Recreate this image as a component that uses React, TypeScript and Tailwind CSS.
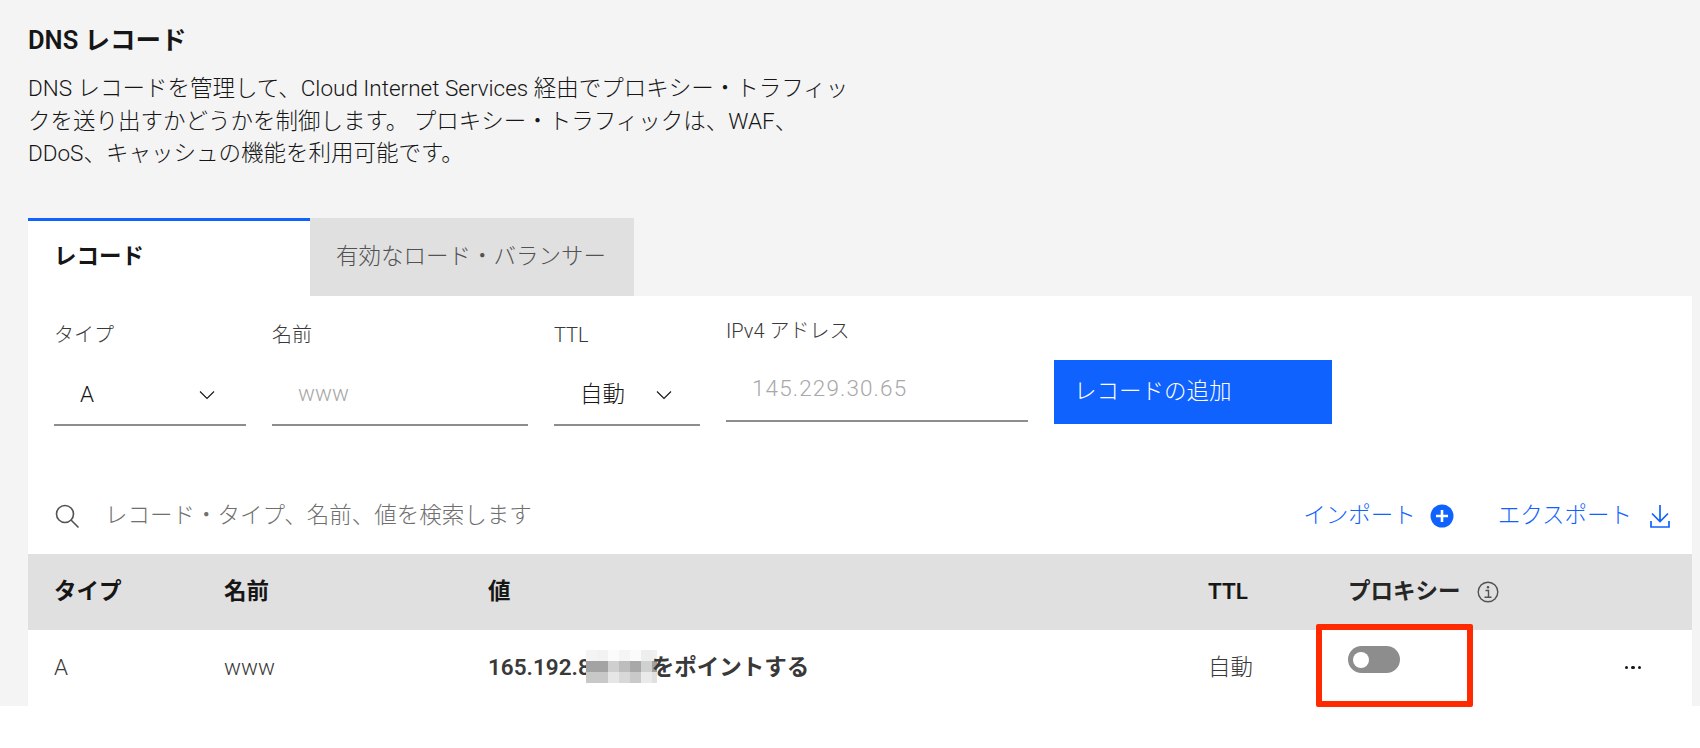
import React from 'react';

const blurRows = [
    ['#f4f4f4', '#f2f2f2', '#fbfbfb', '#f5f5f5', '#fbfbfb', '#eeeeee', '#f0f0f0'],
    ['#a3a3a3', '#a3a3a3', '#cfcfcf', '#bdbdbd', '#a8a8a8', '#d0d0d0', '#a0a0a0'],
    ['#c8c8c8', '#c8c8c8', '#e6e6e6', '#d8d8d8', '#c9c9c9', '#eaeaea', '#e0e0e0'],
];

const Chevron = () => (
    <svg width="16" height="16" viewBox="0 0 16 16" fill="none" stroke="#161616" strokeWidth="1.1">
        <path d="M1 4.5 L8 11.5 L15 4.5" />
    </svg>
);

const SelectField: React.FC<{ label: string; value: string; className: string; pad: string }> = ({ label, value, className, pad }) => (
    <div className={`flex flex-col ${className}`}>
        <label className="text-[20px] leading-[24px] font-light text-[#393939]">{label}</label>
        <div className={`mt-[23px] h-[56px] pb-[4px] flex items-center justify-between border-b-2 border-[#8d8d8d] text-[22.5px] font-light text-[#161616] ${pad}`}>
            <span>{value}</span>
            <Chevron />
        </div>
    </div>
);

const App: React.FC = () => {
    return (
        <div className="w-[1700px] h-[748px] bg-white overflow-hidden font-['Roboto','Noto_Sans_CJK_JP',sans-serif]">
            <div className="h-[706px] bg-[#f4f4f4] pl-[28px] pr-[8px]">
                <h1 className="pt-[24px] text-[25.5px] leading-[32px] font-semibold text-[#161616]">DNS レコード</h1>
                <p className="mt-[16px] w-[830px] text-[22.5px] leading-[32.5px] font-light text-[#161616]">
                    DNS レコードを管理して、Cloud Internet Services 経由でプロキシー・トラフィックを送り出すかどうかを制御します。 プロキシー・トラフィックは、WAF、<br />DDoS、キャッシュの機能を利用可能です。
                </p>

                <div className="mt-[48px] flex h-[78px]">
                    <div className="w-[282px] bg-white border-t-[3px] border-[#0f62fe] pl-[26px] pb-[2px] flex items-center text-[22.5px] font-semibold text-[#161616]">レコード</div>
                    <div className="w-[324px] bg-[#e0e0e0] pl-[26px] flex items-center text-[22.5px] font-light text-[#525252]">有効なロード・バランサー</div>
                </div>

                <div className="bg-white h-[410px]">
                    <div className="flex items-start pl-[26px] pt-[27px] h-[189px]">
                        <SelectField label="タイプ" value="A" className="w-[192px]" pad="pl-[26px] pr-[31px]" />
                        <div className="ml-[26px] w-[256px] flex flex-col">
                            <label className="text-[20px] leading-[24px] font-light text-[#393939]">名前</label>
                            <div className="mt-[23px] h-[56px] pb-[6px] flex items-center border-b-2 border-[#8d8d8d] pl-[26px] text-[22.5px] font-light text-[#a8a8a8]">www</div>
                        </div>
                        <SelectField label="TTL" value="自動" className="ml-[26px] w-[146px]" pad="pl-[26px] pr-[28px]" />
                        <div className="ml-[26px] w-[302px] flex flex-col -mt-[4px]">
                            <label className="text-[20px] leading-[24px] font-light text-[#393939]">IPv4 アドレス</label>
                            <div className="mt-[23px] h-[56px] pb-[8px] flex items-center border-b-2 border-[#8d8d8d] pl-[26px] text-[22.5px] tracking-[1.1px] font-light text-[#a8a8a8]">145.229.30.65</div>
                        </div>
                        <button className="ml-[26px] mt-[37px] w-[278px] h-[64px] bg-[#0f62fe] text-white text-[22.5px] font-light text-left pl-[20px]">レコードの追加</button>
                    </div>
                    <div className="flex items-center justify-between h-[69px] pb-[6px] pl-[26px] pr-[20px]">
                        <div className="flex items-center">
                            <svg width="26" height="26" viewBox="0 0 26 26" fill="none" stroke="#525252" strokeWidth="1.6">
                                <circle cx="11" cy="11" r="8.5" />
                                <path d="M17 17 L24.5 24.5" />
                            </svg>
                            <span className="ml-[25px] text-[22.5px] font-light text-[#6f6f6f]">レコード・タイプ、名前、値を検索します</span>
                        </div>
                        <div className="flex items-center text-[22.5px] font-light text-[#0f62fe]">
                            <span>インポート</span>
                            <svg className="ml-[14px]" width="24" height="24" viewBox="0 0 24 24">
                                <circle cx="12" cy="12" r="11.5" fill="#0f62fe" />
                                <path d="M12 6 V18 M6 12 H18" stroke="white" strokeWidth="2.6" />
                            </svg>
                            <span className="ml-[44px]">エクスポート</span>
                            <svg className="ml-[16px]" width="24" height="26" viewBox="0 0 24 26" fill="none" stroke="#0f62fe" strokeWidth="1.7">
                                <path d="M12 2 V18 M4 10.5 L12 18.5 L20 10.5 M3 18 V24 H21 V18" />
                            </svg>
                        </div>
                    </div>
                    <div className="grid grid-cols-[170px_264px_720px_140px_1fr] h-[76px] bg-[#e0e0e0] items-center pl-[26px] text-[22.5px] font-semibold text-[#161616]">
                        <div>タイプ</div>
                        <div>名前</div>
                        <div>値</div>
                        <div>TTL</div>
                        <div className="flex items-center text-[#262626]">
                            プロキシー
                            <svg className="ml-[16px]" width="22" height="22" viewBox="0 0 22 22" fill="none" stroke="#525252" strokeWidth="1.4">
                                <circle cx="11" cy="11" r="9.8" />
                                <path d="M8.5 9.5 H11.5 V16 M7.5 16.2 H14.5" />
                                <circle cx="11" cy="6.3" r="0.6" fill="#525252" />
                            </svg>
                        </div>
                    </div>
                    <div className="relative grid grid-cols-[170px_264px_720px_140px_1fr] h-[76px] items-center pl-[26px] text-[22.5px] font-light text-[#393939]">
                        <div>A</div>
                        <div>www</div>
                        <div className="flex items-center font-semibold">
                            <span>165.192.8</span>
                            <div className="grid grid-cols-[repeat(6,11px)_5px] grid-rows-[repeat(3,11px)] w-[71px] -mt-[2px] -ml-[5px] -mr-[5px]">
                                {blurRows.flat().map((c, i) => (
                                    <div key={i} style={{ backgroundColor: c }} />
                                ))}
                            </div>
                            <span className="relative">をポイントする</span>
                        </div>
                        <div>自動</div>
                        <div className="flex items-center justify-between pr-[51px]">
                            <div className="w-[52px] h-[27px] -mt-[16px] rounded-full bg-[#8d8d8d] flex items-center pl-[5px]">
                                <div className="w-[16px] h-[16px] rounded-full bg-white" />
                            </div>
                            <div className="flex gap-[3px]">
                                <span className="w-[3.5px] h-[3.5px] rounded-full bg-[#161616]" />
                                <span className="w-[3.5px] h-[3.5px] rounded-full bg-[#161616]" />
                                <span className="w-[3.5px] h-[3.5px] rounded-full bg-[#161616]" />
                            </div>
                        </div>
                        {/* annotation drawn over the screenshot */}
                        <div className="absolute left-[1288px] top-[-6px] w-[157px] h-[83px] border-[6px] border-[#ff2a00] rounded-[2px]" />
                    </div>
                </div>
            </div>
        </div>
    );
};

export default App;
